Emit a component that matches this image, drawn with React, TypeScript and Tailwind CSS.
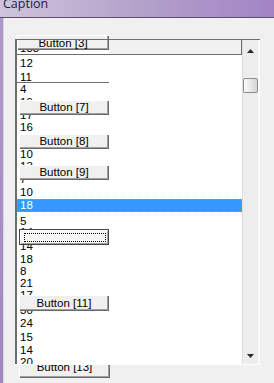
import React from 'react';

const rows: [string, string][] = [
  ['12', 'h-[16px] pt-[2px]'],
  ['11', 'h-[12px]'],
  ['4', 'h-[13px]'],
  ['19', 'h-[13px]'],
  ['17', 'h-[12px]'],
  ['16', 'h-[13px]'],
  ['12', 'h-[14px]'],
  ['10', 'h-[12px]'],
  ['13', 'h-[13px]'],
  ['7', 'h-[13px]'],
  ['10', 'h-[13px]'],
  ['18', 'selected'],
  ['5', 'h-[14px] pt-[3px]'],
  ['14', 'h-[14px]'],
  ['14', 'h-[13px]'],
  ['18', 'h-[12px]'],
  ['8', 'h-[12px]'],
  ['21', 'h-[12px]'],
  ['17', 'h-[15px]'],
  ['30', 'h-[13px]'],
  ['24', 'h-[14px]'],
  ['15', 'h-[13px]'],
  ['14', 'h-[12px]'],
  ['20', 'h-[13px]'],
];

const btnShadow =
  'shadow-[inset_1px_1px_0_#ffffff,inset_-1px_-1px_0_#696969,inset_-2px_-2px_0_#a0a0a0]';

// a push button laid over the list items
const ListButton = ({ label, className }: { label: string; className: string }) => (
  <div
    className={`absolute left-[2px] w-[90px] bg-[#f0f0f0] text-center ${btnShadow} ${className}`}
  >
    {label}
  </div>
);

const Arrow = ({ down }: { down?: boolean }) => (
  <svg width="7" height="4" viewBox="0 0 7 4">
    <path d={down ? 'M0 0H7L3.5 4Z' : 'M3.5 0L7 4H0Z'} fill="#2a2a2a" />
  </svg>
);

export default function App() {
  return (
    <div className="w-[274px] h-[383px] overflow-hidden bg-[#f0f0f0] flex flex-col font-['Liberation_Sans',Tahoma,sans-serif] text-[11.5px] text-black">
      {/* caption bar */}
      <div className="h-[18px] shrink-0 overflow-hidden border-b border-[#5c4f6d] bg-linear-to-r from-[#cfc4dc] via-[#b4a2ca] to-[#a283c4]">
        <div className="pl-[3px] -mt-[2px] leading-[12px] text-[12.5px] text-[#1c2040] font-['Open_Sans',sans-serif]">
          Caption
        </div>
      </div>

      <div className="flex flex-1">
        <div className="w-[3px] bg-linear-to-b from-[#ae98c8] to-[#9f88bd]" />
        <div className="w-px bg-[#d6d6dc]" />

        <div className="flex-1 pt-[21px]">
          {/* list box */}
          <div className="relative ml-[11px] w-[245px] flex border-t border-[#6e6e6e] border-b border-b-white">
            <div className="relative w-[227px] h-[324px] overflow-hidden border-l-2 border-[#6e6e6e] bg-white">
              <div className="flex h-[15px] border-b border-[#6e6e6e]">
                <div className="w-[92px] pl-[3px] pt-[2px] leading-[13px]">133</div>
                <div className="flex-1 bg-[#f0f0f0] border-r border-[#6e6e6e]" />
              </div>

              {rows.map(([t, cls], i) =>
                cls === 'selected' ? (
                  <div
                    key={i}
                    className="h-[13px] pl-[2px] leading-[11px] bg-[#3399ff] text-white border border-dotted border-[#d98a35]"
                  >
                    {t}
                  </div>
                ) : (
                  <div key={i} className={`${cls} overflow-hidden pl-[3px] leading-[13px]`}>
                    {t}
                  </div>
                )
              )}

              <div className="absolute top-[42px] left-0 w-[92px] h-px bg-[#6e6e6e]" />

              <ListButton label="Button [7]" className="top-[60px] h-[15px] leading-[15px]" />
              <ListButton label="Button [8]" className="top-[94px] h-[15px] leading-[15px]" />
              <ListButton label="Button [9]" className="top-[125px] h-[15px] leading-[15px]" />

              {/* focused button */}
              <div className="absolute top-[189px] left-[2px] w-[90px] h-[16px] border border-[#454545] bg-[#f6f6f6] shadow-[inset_1px_1px_0_#ffffff,inset_-1px_-1px_0_#a0a0a0]">
                <div className="absolute top-[3px] left-[4px] right-[2px] bottom-[2px] border border-dotted border-black" />
              </div>

              <ListButton label="Button [11]" className="top-[255px] h-[16px] leading-[16px]" />
            </div>

            {/* scroll bar */}
            <div className="w-[18px] h-[324px] flex flex-col items-center bg-[#ededed] border-l border-[#dcdcdc] border-r-2 border-r-[#fafafa]">
              <div className="h-[17px] pt-[9px]">
                <Arrow />
              </div>
              <div className="mt-[21px] w-[15px] h-[15px] rounded-[2px] border border-[#8c8c8c] bg-linear-to-r from-[#fbfbfb] to-[#d4d4d4]" />
              <div className="flex-1" />
              <div className="h-[17px] pt-[7px]">
                <Arrow down />
              </div>
            </div>

            <div
              className={`absolute -top-[5px] left-[2px] w-[92px] h-[15px] pt-[2px] leading-[13px] text-center bg-[#f0f0f0] ${btnShadow}`}
            >
              Button [3]
            </div>
            <div className="absolute -top-px left-0 w-[244px] h-px bg-[#6e6e6e]" />
          </div>

          <div className="ml-[15px] w-[91px] h-[13px] overflow-hidden bg-[#f0f0f0] text-center shadow-[inset_1px_0_0_#ffffff,inset_-1px_-1px_0_#696969,inset_-2px_-2px_0_#a0a0a0]">
            <div className="-mt-[4px] leading-[13px]">Button [13]</div>
          </div>
        </div>
      </div>
    </div>
  );
}
